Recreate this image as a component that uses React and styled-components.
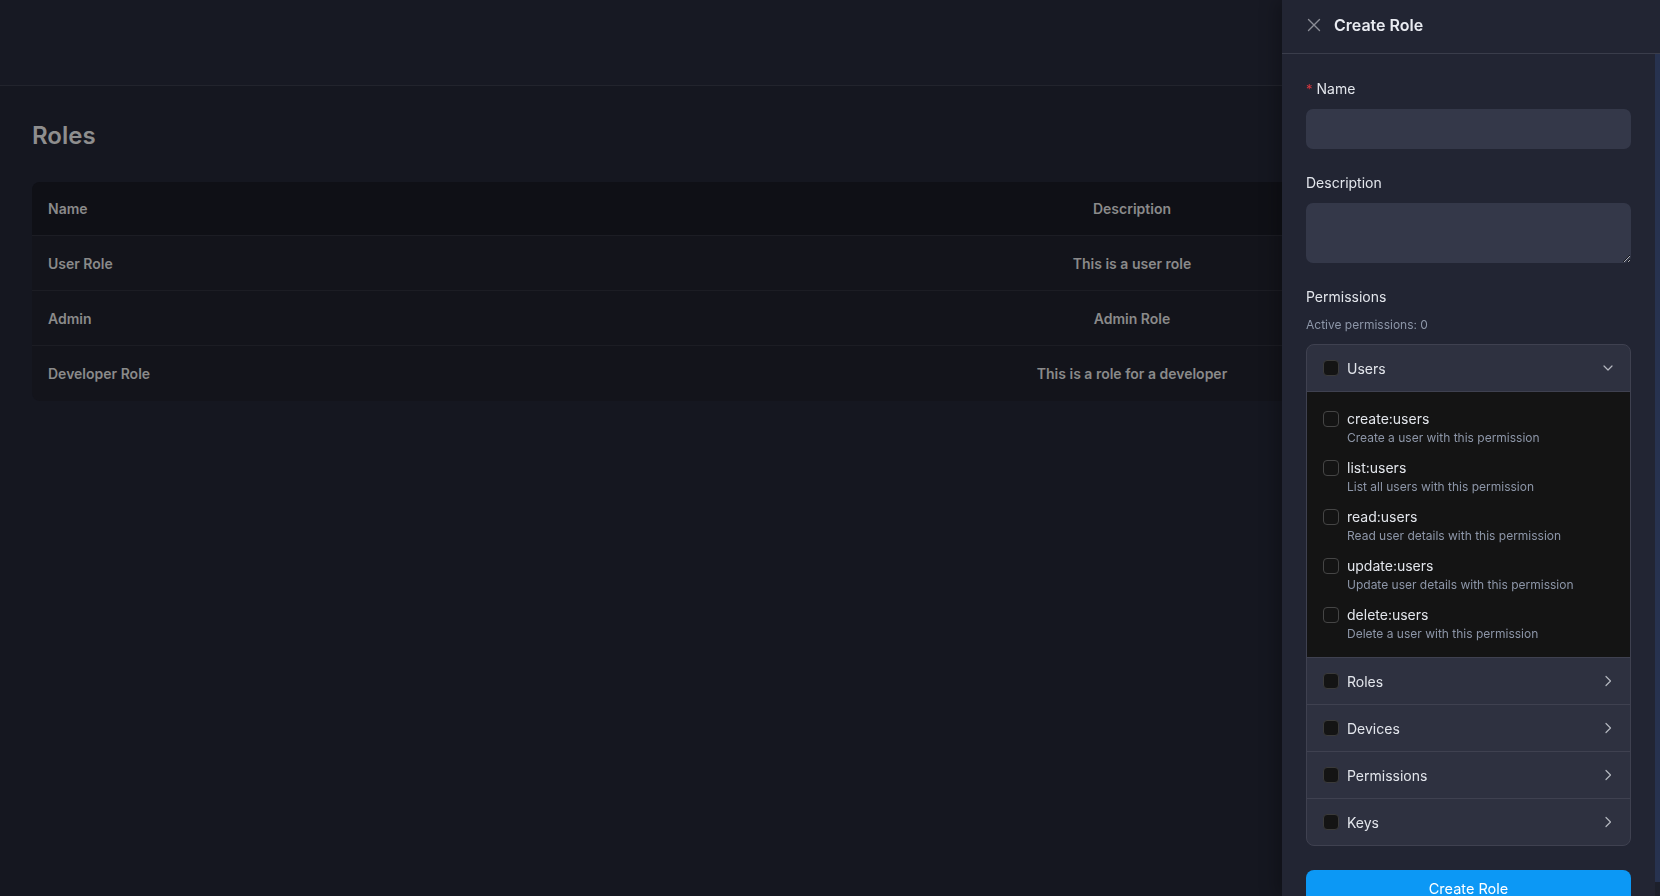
import React from "react";
import styled, { createGlobalStyle } from "styled-components";

const GlobalStyle = createGlobalStyle`
  html, body {
    margin: 0;
    padding: 0;
    background: #151720;
    font-family: Inter, "Noto Sans", "Liberation Sans", sans-serif;
    overflow: hidden;
  }
  * { box-sizing: border-box; }
`;

const roles = [
  { name: "User Role", description: "This is a user role" },
  { name: "Admin", description: "Admin Role" },
  { name: "Developer Role", description: "This is a role for a developer" },
];

const userPermissions = [
  { key: "create:users", text: "Create a user with this permission" },
  { key: "list:users", text: "List all users with this permission" },
  { key: "read:users", text: "Read user details with this permission" },
  { key: "update:users", text: "Update user details with this permission" },
  { key: "delete:users", text: "Delete a user with this permission" },
];

const groups = ["Roles", "Devices", "Permissions", "Keys"];

const CloseIcon = () => (
  <svg width="14" height="14" viewBox="0 0 14 14" fill="none">
    <path d="M1.5 1.5L12.5 12.5M12.5 1.5L1.5 12.5" stroke="#8b8d96" strokeWidth="1.4" strokeLinecap="round" />
  </svg>
);

const ChevronDown = () => (
  <svg width="12" height="12" viewBox="0 0 12 12" fill="none">
    <path d="M2 4L6 8L10 4" stroke="#b4b7bf" strokeWidth="1.2" strokeLinecap="round" strokeLinejoin="round" />
  </svg>
);

const ChevronRight = () => (
  <svg width="12" height="12" viewBox="0 0 12 12" fill="none">
    <path d="M4 1.5L8.5 6L4 10.5" stroke="#b4b7bf" strokeWidth="1.2" strokeLinecap="round" strokeLinejoin="round" />
  </svg>
);

const App = () => {
  return (
    <>
      <GlobalStyle />
      <Page>
        <TopBar />
        <Main>
          <Title>Roles</Title>
          <Table>
            <HeadRow>
              <Cell>Name</Cell>
              <Cell $center>Description</Cell>
              <Cell $center>Actions</Cell>
            </HeadRow>
            {roles.map((r) => (
              <Row key={r.name}>
                <Cell>{r.name}</Cell>
                <Cell $center>{r.description}</Cell>
                <Cell $center>Edit</Cell>
              </Row>
            ))}
          </Table>
        </Main>
      </Page>

      <Drawer>
        <DrawerHeader>
          <CloseButton>
            <CloseIcon />
          </CloseButton>
          <DrawerTitle>Create Role</DrawerTitle>
        </DrawerHeader>
        <DrawerBody>
          <FormItem>
            <Label>
              <Required>*</Required>Name
            </Label>
            <Input />
          </FormItem>
          <FormItem>
            <Label>Description</Label>
            <TextArea />
          </FormItem>
          <Label>Permissions</Label>
          <ActiveCount>Active permissions: 0</ActiveCount>
          <Collapse>
            <PanelHeader>
              <GroupBox />
              <PanelTitle>Users</PanelTitle>
              <ChevronDown />
            </PanelHeader>
            <PanelContent>
              {userPermissions.map((p) => (
                <PermItem key={p.key}>
                  <ItemBox />
                  <div>
                    <PermName>{p.key}</PermName>
                    <PermText>{p.text}</PermText>
                  </div>
                </PermItem>
              ))}
            </PanelContent>
            {groups.map((g) => (
              <PanelHeader key={g} $bordered>
                <GroupBox />
                <PanelTitle>{g}</PanelTitle>
                <ChevronRight />
              </PanelHeader>
            ))}
          </Collapse>
          <SubmitButton>Create Role</SubmitButton>
        </DrawerBody>
        <ScrollTrack>
          <ScrollThumb />
        </ScrollTrack>
      </Drawer>
    </>
  );
};

const Page = styled.div`
  min-height: 100vh;
  display: flex;
  flex-direction: column;
`;

const TopBar = styled.div`
  height: 86px;
  background: #171923;
  border-bottom: 1px solid #22242d;
`;

const Main = styled.main`
  padding: 34px 32px;
`;

const Title = styled.h1`
  margin: 0 0 30px;
  font-size: 24px;
  line-height: 32px;
  font-weight: 600;
  color: #8e8e8e;
`;

const Table = styled.div`
  display: grid;
  grid-template-columns: 1fr 300px 346px;
  border-radius: 8px;
  overflow: hidden;
  background: #13141b;
`;

const HeadRow = styled.div`
  display: contents;
  & > div {
    height: 54px;
    background: #0f1016;
    border-bottom: 1px solid #1c1d24;
  }
`;

const Row = styled.div`
  display: contents;
  & > div {
    height: 55px;
    border-bottom: 1px solid #1c1d24;
  }
  &:last-child > div {
    border-bottom: none;
  }
`;

const Cell = styled.div`
  display: flex;
  align-items: center;
  justify-content: ${(p) => (p.$center ? "center" : "flex-start")};
  padding: 0 16px;
  font-size: 14px;
  font-weight: 600;
  color: #8a8a8a;
`;

const Drawer = styled.aside`
  position: fixed;
  top: 0;
  right: 0;
  bottom: 0;
  width: 378px;
  display: flex;
  flex-direction: column;
  background: #222533;
  box-shadow: -6px 0 16px rgba(0, 0, 0, 0.25);
`;

const DrawerHeader = styled.header`
  height: 54px;
  flex-shrink: 0;
  display: flex;
  align-items: center;
  gap: 12px;
  padding: 0 24px;
  border-bottom: 1px solid #3a3d4b;
`;

const CloseButton = styled.button`
  display: flex;
  align-items: center;
  justify-content: center;
  width: 16px;
  height: 16px;
  padding: 0;
  margin-top: -3px;
  background: none;
  border: none;
`;

const DrawerTitle = styled.div`
  font-size: 16px;
  font-weight: 600;
  color: #e9ebf1;
  margin-top: -3px;
`;

const DrawerBody = styled.div`
  flex: 1;
  overflow-y: auto;
  padding: 24px 29px 4px 24px;
  scrollbar-width: none;
  &::-webkit-scrollbar {
    display: none;
  }
`;

const ScrollTrack = styled.div`
  position: absolute;
  top: 54px;
  right: 0;
  bottom: 0;
  width: 5px;
  background: #1d202b;
`;

const ScrollThumb = styled.div`
  height: 828px;
  background: #27324f;
`;

const FormItem = styled.div`
  margin-bottom: 23px;
`;

const Label = styled.div`
  font-size: 14px;
  line-height: 22px;
  color: #e3e6ec;
  margin-bottom: 9px;
`;

const Required = styled.span`
  color: #d9363e;
  margin-right: 4px;
  font-size: 13px;
`;

const Input = styled.input`
  display: block;
  width: 100%;
  height: 40px;
  border: none;
  border-radius: 7px;
  background: #343849;
  outline: none;
`;

const TextArea = styled.textarea`
  display: block;
  width: 100%;
  height: 60px;
  border: none;
  border-radius: 7px;
  background: #343849;
  outline: none;
`;

const ActiveCount = styled.div`
  margin-top: -2px;
  font-size: 12px;
  line-height: 20px;
  color: #8d96a8;
`;

const Collapse = styled.div`
  margin-top: 9px;
  border: 1px solid #3f4150;
  border-radius: 8px;
  overflow: hidden;
  background: #2e3140;
`;

const PanelHeader = styled.div`
  height: ${(p) => (p.$bordered ? "47px" : "46px")};
  display: flex;
  align-items: center;
  padding: 0 16px;
  border-top: ${(p) => (p.$bordered ? "1px solid #3f4150" : "none")};
`;

const PanelTitle = styled.span`
  flex: 1;
  margin-left: 8px;
  font-size: 14px;
  color: #e3e6ec;
`;

const GroupBox = styled.span`
  width: 16px;
  height: 16px;
  border-radius: 4px;
  background: #141414;
  border: 1px solid #3a3a3a;
`;

const PanelContent = styled.div`
  background: #141414;
  border-top: 1px solid #3f4150;
  padding: 16px 16px 13px;
  display: flex;
  flex-direction: column;
  gap: 9px;
`;

const PermItem = styled.div`
  display: flex;
  align-items: flex-start;
  gap: 8px;
  height: 40px;
`;

const ItemBox = styled.span`
  flex-shrink: 0;
  width: 16px;
  height: 16px;
  margin-top: 3px;
  border-radius: 4px;
  border: 1px solid #454545;
`;

const PermName = styled.div`
  font-size: 14px;
  line-height: 21px;
  color: #e3e6ec;
`;

const PermText = styled.div`
  font-size: 12px;
  line-height: 18px;
  color: #8d96a8;
`;

const SubmitButton = styled.button`
  display: block;
  width: 100%;
  height: 36px;
  margin-top: 24px;
  border: none;
  border-radius: 8px;
  background: #0c98f5;
  color: #ffffff;
  font-family: inherit;
  font-size: 14.5px;
`;

export default App;
